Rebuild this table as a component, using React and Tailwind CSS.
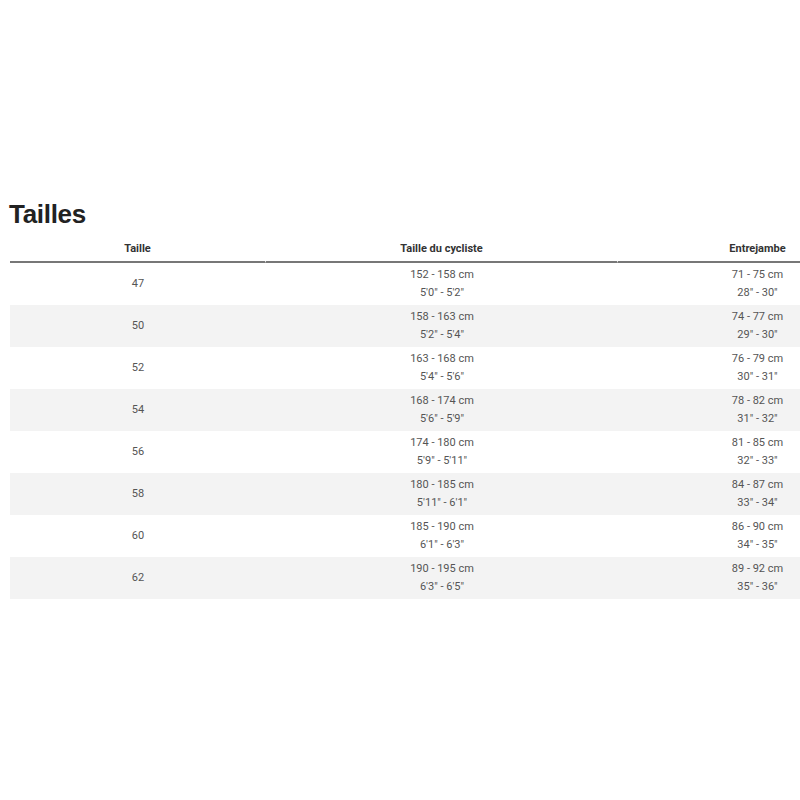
const rows = [
  ['47', '152 - 158 cm', '5\'0" - 5\'2"', '71 - 75 cm', '28" - 30"'],
  ['50', '158 - 163 cm', '5\'2" - 5\'4"', '74 - 77 cm', '29" - 30"'],
  ['52', '163 - 168 cm', '5\'4" - 5\'6"', '76 - 79 cm', '30" - 31"'],
  ['54', '168 - 174 cm', '5\'6" - 5\'9"', '78 - 82 cm', '31" - 32"'],
  ['56', '174 - 180 cm', '5\'9" - 5\'11"', '81 - 85 cm', '32" - 33"'],
  ['58', '180 - 185 cm', '5\'11" - 6\'1"', '84 - 87 cm', '33" - 34"'],
  ['60', '185 - 190 cm', '6\'1" - 6\'3"', '86 - 90 cm', '34" - 35"'],
  ['62', '190 - 195 cm', '6\'3" - 6\'5"', '89 - 92 cm', '35" - 36"'],
];

export default function App() {
  return (
    <div className="min-h-[800px] w-[800px] overflow-hidden bg-white pt-[198px] font-['Roboto',sans-serif]">
      <h2 className="ml-[9px] h-[32px] text-[26px] leading-[32px] font-bold tracking-[-0.3px] text-[#222] font-['Liberation_Sans','Arial',sans-serif]">
        Tailles
      </h2>
      <table className="ml-[10px] mt-[9px] w-[887px] table-fixed border-separate border-spacing-0 text-[11px] text-[#555]">
        <colgroup>
          <col className="w-[256px]" />
          <col className="w-[352px]" />
          <col className="w-[279px]" />
        </colgroup>
        <thead>
          <tr>
            <th className="h-[24px] border-b-2 border-r border-[#777] border-r-white pb-[2px] font-bold text-[#333]">Taille</th>
            <th className="h-[24px] border-b-2 border-r border-[#777] border-r-white pb-[2px] font-bold text-[#333]">Taille du cycliste</th>
            <th className="h-[24px] border-b-2 border-[#777] pb-[2px] font-bold text-[#333]">Entrejambe</th>
          </tr>
        </thead>
        <tbody>
          {rows.map((r, i) => (
            <tr key={r[0]} className={i % 2 === 1 ? 'bg-[#f3f3f3]' : 'bg-white'}>
              <td className="h-[42px] text-center align-middle leading-[18px]">{r[0]}</td>
              <td className="h-[42px] text-center align-middle leading-[18px]">
                <div>{r[1]}</div>
                <div>{r[2]}</div>
              </td>
              <td className="h-[42px] text-center align-middle leading-[18px]">
                <div>{r[3]}</div>
                <div>{r[4]}</div>
              </td>
            </tr>
          ))}
        </tbody>
      </table>
    </div>
  );
}
